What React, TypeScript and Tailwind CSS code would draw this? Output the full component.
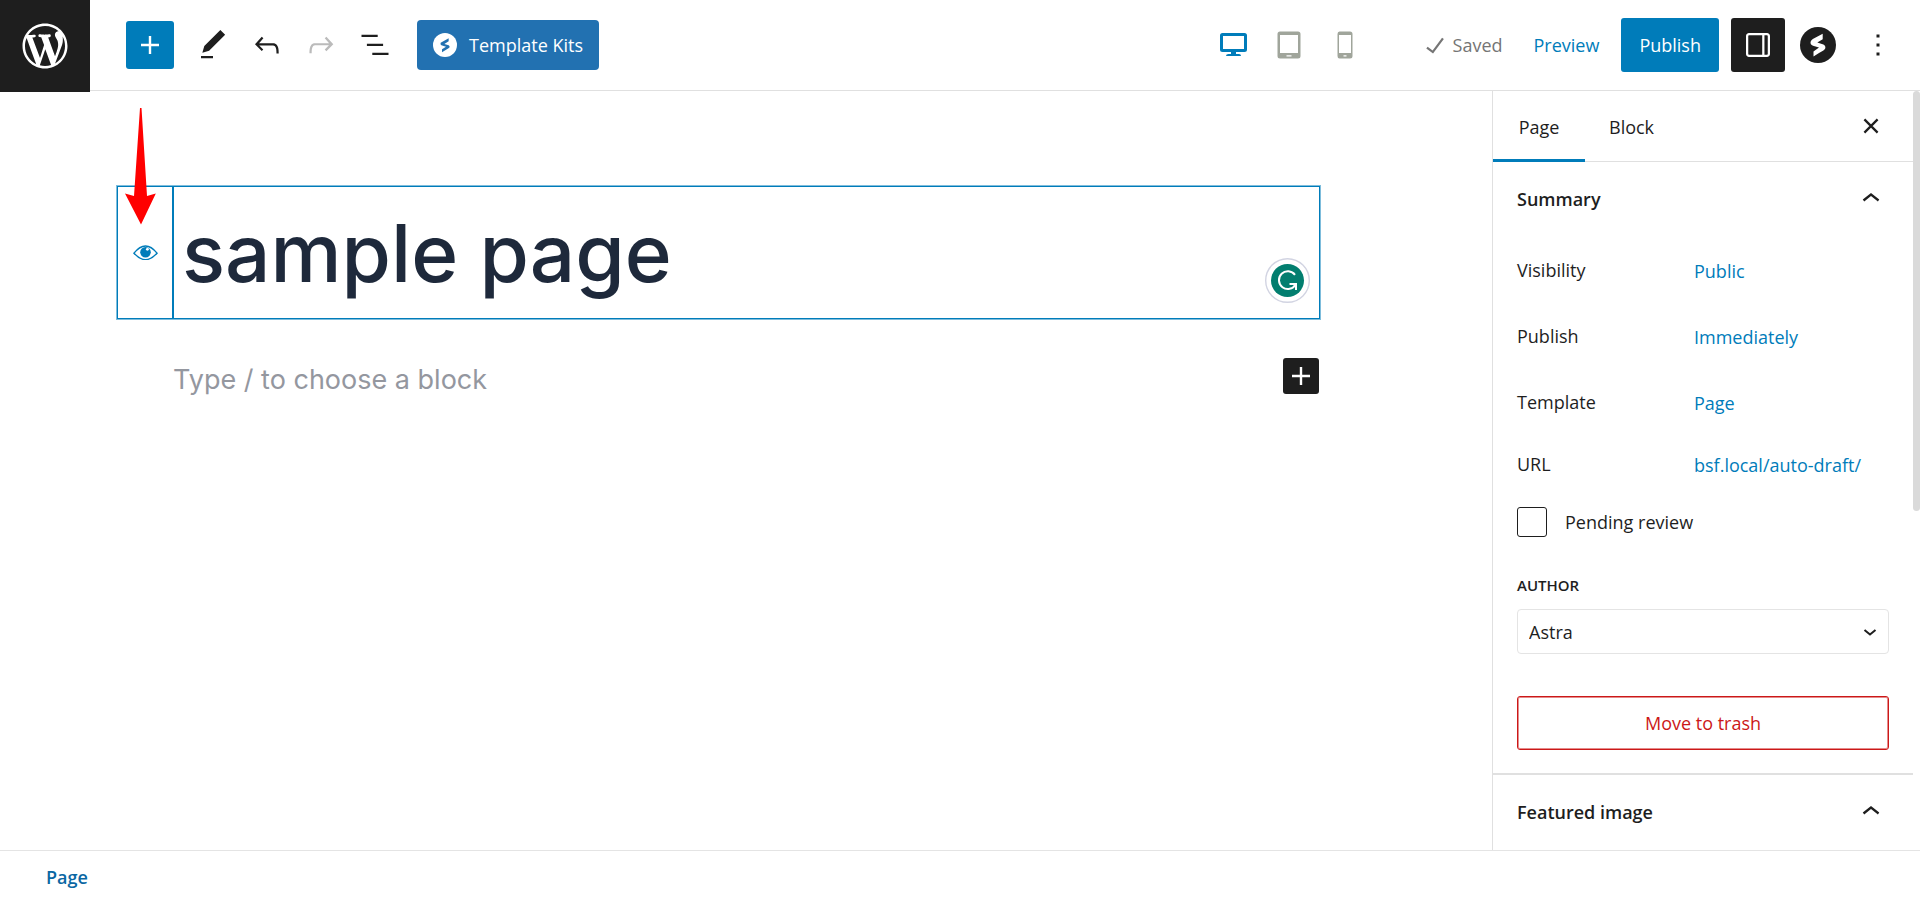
import type { ReactNode } from "react";

function Icon({ children, className = "size-9" }: { children: ReactNode; className?: string }) {
  return (
    <svg viewBox="0 0 24 24" className={className} fill="currentColor" aria-hidden="true">
      {children}
    </svg>
  );
}

function WordPressLogo() {
  return (
    <svg viewBox="-2 -2 24 24" className="size-[54px]" fill="currentColor" aria-hidden="true">
      <path d="M20 10c0-5.51-4.49-10-10-10C4.48 0 0 4.49 0 10c0 5.52 4.48 10 10 10 5.51 0 10-4.48 10-10zM7.78 15.37L4.37 6.22c.55-.02 1.17-.08 1.17-.08.5-.06.44-1.13-.06-1.11 0 0-1.45.11-2.37.11-.18 0-.37 0-.58-.01C4.12 2.69 6.87 1.11 10 1.11c2.33 0 4.45.87 6.05 2.34-.68-.11-1.65.39-1.65 1.58 0 .74.45 1.36.9 2.1.35.61.55 1.36.55 2.46 0 1.49-1.4 5-1.4 5l-3.03-8.37c.54-.02.82-.17.82-.17.5-.05.44-1.25-.06-1.22 0 0-1.44.12-2.38.12-.87 0-2.33-.12-2.33-.12-.5-.03-.56 1.2-.06 1.22l.92.08 1.26 3.41zM17.41 10c.24-.64.74-1.87.43-4.25.7 1.29 1.05 2.71 1.05 4.25 0 3.29-1.73 6.24-4.4 7.78.97-2.59 1.94-5.2 2.92-7.78zM6.1 18.09C3.12 16.65 1.11 13.53 1.11 10c0-1.3.23-2.48.72-3.59C3.25 10.3 4.67 14.2 6.1 18.09zm4.03-6.63l2.58 6.98c-.86.29-1.76.45-2.71.45-.79 0-1.57-.11-2.29-.33.81-2.38 1.62-4.74 2.42-7.1z" />
    </svg>
  );
}

function TemplateKitsMark() {
  return (
    <svg viewBox="0 0 36 36" className="size-6" aria-hidden="true">
      <circle cx="18" cy="18" r="18" className="fill-white" />
      <path
        className="fill-[#2271b1]"
        d="M23.5 8V12.2L17 16.500L23.500 18.300Q25.800 19.500 24.500 22L13.500 28.800V24.500L19.500 20.500L12.500 18.500Q10.500 17.200 11.500 14.800Z"
      />
    </svg>
  );
}

function SpectraMark() {
  return (
    <svg viewBox="0 0 36 36" className="size-9" aria-hidden="true">
      <circle cx="18" cy="18" r="18" className="fill-[#1e1e1e]" />
      <path
        className="fill-white"
        d="M22.700 6.700V12.200L17.300 15.600L23.400 17.400Q26 18.800 25.200 21.400Q24.700 22.600 23.400 23.400L19 26L13.500 29.600V24.600L19 20.600L13 18.800Q10 17.600 10.600 14.800Q11.200 13 12.800 12Z"
      />
    </svg>
  );
}

function ToolbarButton({ label, children, disabled }: { label: string; children: ReactNode; disabled?: boolean }) {
  return (
    <button
      type="button"
      aria-label={label}
      disabled={disabled}
      className="flex size-12 items-center justify-center rounded-xs text-[#1e1e1e] disabled:text-[#bbbbbb]"
    >
      {children}
    </button>
  );
}

function Header() {
  return (
    <header className="flex h-[91px] shrink-0 items-start border-b border-[#e0e0e0]">
      <a href="#dashboard" aria-label="View pages" className="flex h-[92px] w-[90px] shrink-0 items-center justify-center bg-[#1e1e1e] text-white">
        <WordPressLogo />
      </a>
      <div className="flex h-[90px] grow items-center justify-between pr-[15px] pl-9">
        <div className="flex items-center gap-[6px]">
          <button type="button" aria-label="Toggle block inserter" className="mr-[9px] flex size-12 items-center justify-center rounded-[3px] bg-[#007cba] text-white">
            <Icon>
              <path d="M18 11.2h-5.2V6h-1.6v5.2H6v1.6h5.2V18h1.6v-5.2H18z" />
            </Icon>
          </button>
          <ToolbarButton label="Tools">
            <Icon>
              <path d="M20.1 5.1L16.9 2 6.2 12.7l-1.3 4.4 4.5-1.3L20.1 5.1zM4 20.8h8v-1.5H4v1.5z" />
            </Icon>
          </ToolbarButton>
          <ToolbarButton label="Undo">
            <Icon>
              <path d="M18.3 11.7c-.6-.6-1.4-.9-2.3-.9H6.7l2.9-3.3-1.1-1-4.5 5L8.5 16l1-1-2.7-2.7H16c.5 0 .9.2 1.3.5 1 1 1 3.4 1 4.5v.3h1.5v-.2c0-1.5 0-4.3-1.5-5.7z" />
            </Icon>
          </ToolbarButton>
          <ToolbarButton label="Redo" disabled>
            <Icon>
              <path d="M15.6 6.5l-1.1 1 2.9 3.3H8c-.9 0-1.7.3-2.3.9-1.4 1.5-1.4 4.2-1.4 5.6v.2h1.5v-.3c0-1.1 0-3.5 1-4.5.3-.3.7-.5 1.3-.5h9.2L14.5 15l1.1 1.1 4.6-4.6-4.6-5z" />
            </Icon>
          </ToolbarButton>
          <ToolbarButton label="Document overview">
            <Icon>
              <path d="M13.8 5.2H3v1.5h10.8V5.2zm-3.6 12v1.5H21v-1.5H10.2zm7.2-6H6.6v1.5h10.8v-1.5z" />
            </Icon>
          </ToolbarButton>
          <button type="button" className="ml-3 flex h-[50px] items-center gap-3 rounded-[4px] bg-[#2271b1] px-4 text-lg text-white">
            <TemplateKitsMark />
            Template Kits
          </button>
        </div>
        <div className="flex items-center">
          <div className="flex items-center gap-7 text-[#a0a59b]">
            <button type="button" aria-label="Desktop" className="text-[#007cba]">
              <svg viewBox="0 0 28 28" className="size-7" fill="currentColor" aria-hidden="true">
                <path fillRule="evenodd" d="M3 2H24.500Q27 2 27 4.500V18.500Q27 21 24.500 21H16V23H19Q21 23 21 25H6Q6 23 8.500 23H11V21H2.500Q0 21 0 18.500V4.500Q0 2 2.500 2ZM3 5V18H24V5Z" />
              </svg>
            </button>
            <button type="button" aria-label="Tablet">
              <svg viewBox="0 0 28 28" className="size-7" fill="currentColor" aria-hidden="true">
                <path fillRule="evenodd" d="M4 0.500H22Q24.500 0.500 24.500 3V25Q24.500 27.500 22 27.500H4Q1.500 27.500 1.500 25V3Q1.500 0.500 4 0.500ZM4 4V22H22V4ZM10.500 24.300V25.500H15.500V24.300Z" />
              </svg>
            </button>
            <button type="button" aria-label="Mobile">
              <svg viewBox="0 0 28 28" className="size-7" fill="currentColor" aria-hidden="true">
                <path fillRule="evenodd" d="M7.500 0.500H18Q20.500 0.500 20.500 3V25Q20.500 27.500 18 27.500H7.500Q5.500 27.500 5.500 25V3Q5.500 0.500 7.500 0.500ZM7 4V22H19V4ZM11.500 24.300V25.500H14.500V24.300Z" />
              </svg>
            </button>
          </div>
          <div className="ml-[57px] flex items-center text-lg text-[#757575]">
            <Icon>
              <path d="M16.700 7.100l-6.300 8.500-3.300-2.500-.9 1.200 4.500 3.400L17.900 8z" />
            </Icon>
            Saved
          </div>
          <button type="button" className="ml-[31px] text-lg text-[#007cba]">Preview</button>
          <button type="button" className="ml-[22px] h-[54px] rounded-[3px] bg-[#007cba] px-[18px] text-lg text-white">Publish</button>
          <button type="button" aria-label="Settings" className="ml-3 flex size-[54px] items-center justify-center rounded-[3px] bg-[#1e1e1e] text-white">
            <Icon>
              <path fillRule="evenodd" d="M18 4H6c-1.100 0-2 .9-2 2v12c0 1.100.9 2 2 2h12c1.100 0 2-.9 2-2V6c0-1.100-.9-2-2-2zm-4 14.500H6c-.3 0-.5-.2-.5-.5V6c0-.3.2-.5.5-.5h8.800v13zm4.500-.5c0 .3-.2.5-.5.5h-1.700v-13H18c.3 0 .5.200.5.500v12z" />
            </Icon>
          </button>
          <button type="button" aria-label="Spectra Page Settings" className="ml-[15px]">
            <SpectraMark />
          </button>
          <button type="button" aria-label="Options" className="ml-[15px] flex size-[54px] items-center justify-center text-[#1e1e1e]">
            <Icon>
              <path d="M13 19h-2v-2h2v2zm0-6h-2v-2h2v2zm0-6h-2V5h2v2z" />
            </Icon>
          </button>
        </div>
      </div>
    </header>
  );
}

function GrammarlyBadge() {
  return (
    <svg viewBox="0 0 45 45" className="absolute right-[9px] bottom-[15px] size-[45px]" aria-hidden="true">
      <circle cx="22.500" cy="22.500" r="21.800" fill="#fff" stroke="#d2d4e2" strokeWidth="1.400" />
      <circle cx="22.500" cy="22.500" r="16.500" fill="#027e6f" />
      <path d="M30 16.800A8.900 8.900 0 1 0 30.600 26.500" fill="none" stroke="#fff" strokeWidth="2" />
      <path d="M24.500 26H31V32" fill="none" stroke="#fff" strokeWidth="2" />
    </svg>
  );
}

function Editor() {
  return (
    <main className="min-w-0 grow px-16 pt-[95px] font-[Inter,sans-serif]">
      <div className="mx-auto max-w-[1148px]">
        <div className="relative -ml-[55px] flex h-[133px] border border-[#007cba] ring-1 ring-[#007cba]/50">
          <button type="button" aria-label="Disable title" className="flex w-[54px] shrink-0 items-center justify-center text-[#007cba]">
            <svg viewBox="0 0 26 16" className="w-[25px]" fill="none" aria-hidden="true">
              <path d="M1 8.500Q13 -6.500 25 8.500Q13 22 1 8.500Z" stroke="currentColor" strokeWidth="1.500" />
              <circle cx="13" cy="7.500" r="5.500" fill="currentColor" />
              <circle cx="15" cy="4.500" r="1.500" fill="#fff" />
            </svg>
          </button>
          <h1 contentEditable suppressContentEditableWarning className="grow border-l-2 border-[#007cba] pl-2 text-[80px] leading-[132px] font-medium text-[#1e293b] outline-none">
            sample page
          </h1>
          <GrammarlyBadge />
          <svg viewBox="0 0 32 117" className="absolute -top-[79px] left-[6px] w-8" fill="#ff0000" aria-hidden="true">
            <path d="M16 0H17.500L23 88L31.800 85.500L17 116.500L1 85.500L10 88Z" />
          </svg>
        </div>
        <div className="mt-[39px] flex items-start justify-between px-px">
          <p className="text-[27px] leading-[44px] text-[#94979f]">Type / to choose a block</p>
          <button type="button" aria-label="Add block" className="flex size-9 items-center justify-center rounded-[3px] bg-[#1e1e1e] text-white">
            <Icon>
              <path d="M18 11.200h-5.200V6h-1.600v5.200H6v1.600h5.200V18h1.600v-5.200H18z" />
            </Icon>
          </button>
        </div>
      </div>
    </main>
  );
}

function PanelHeading({ children }: { children: ReactNode }) {
  return (
    <h2>
      <button type="button" aria-expanded="true" className="flex h-[74px] w-full items-center justify-between px-6 text-lg font-semibold">
        {children}
        <Icon>
          <path d="M6.500 12.400L12 8l5.500 4.400-.9 1.200L12 10l-4.500 3.600-1-1.200z" />
        </Icon>
      </button>
    </h2>
  );
}

const summary = [
  { label: "Visibility", value: "Public" },
  { label: "Publish", value: "Immediately" },
  { label: "Template", value: "Page" },
  { label: "URL", value: "bsf.local/auto-draft/" },
];

function Sidebar() {
  return (
    <aside className="flex w-[428px] shrink-0 overflow-hidden border-l border-[#e0e0e0]">
      <div className="min-w-0 grow">
        <div role="tablist" className="flex h-[71px] items-center border-b border-[#e0e0e0] pr-6">
          <button type="button" role="tab" aria-selected="true" className="h-[71px] w-[92px] border-b-3 border-[#007cba] pt-1 text-lg">Page</button>
          <button type="button" role="tab" aria-selected="false" className="h-[71px] px-6 pt-px text-lg">Block</button>
          <button type="button" aria-label="Close settings" className="ml-auto">
            <Icon>
              <path d="M7.600 7.600L16.400 16.400M16.400 7.600L7.600 16.400" stroke="currentColor" strokeWidth="1.500" />
            </Icon>
          </button>
        </div>
        <PanelHeading>Summary</PanelHeading>
        <div className="px-6 pt-px text-lg">
          <dl>
            {summary.map((row) => (
              <div key={row.label} className="flex h-[66px] items-center last:h-[58px]">
                <dt className="w-[177px] shrink-0">{row.label}</dt>
                <dd className="pt-[2px]">
                  <button type="button" className="text-[#007cba]">{row.value}</button>
                </dd>
              </div>
            ))}
          </dl>
          <div className="mt-[14px] flex items-center gap-[18px]">
            <input id="pending" type="checkbox" className="size-[30px] appearance-none rounded-[3px] border border-[#1e1e1e]" />
            <label htmlFor="pending">Pending review</label>
          </div>
          <label htmlFor="author" className="mt-9 block text-[15px] leading-6 font-semibold uppercase">Author</label>
          <div className="relative mt-[12px]">
            <select id="author" className="h-[45px] w-full appearance-none rounded-[4px] border border-[#e4e4e4] px-[11px]">
              <option>Astra</option>
            </select>
            <svg viewBox="0 0 14 8" className="pointer-events-none absolute top-5 right-3 w-[14px]" fill="none" stroke="#1e1e1e" strokeWidth="2" aria-hidden="true">
              <path d="M1.500 1L7 5.500L12.500 1" />
            </svg>
          </div>
          <button type="button" className="mt-[42px] h-[54px] w-full rounded-[3px] border border-[#cc1818] text-[#cc1818] inset-ring inset-ring-[#cc1818]/50">
            Move to trash
          </button>
        </div>
        <div className="mt-[23px] border-t-2 border-[#e0e0e0]">
          <PanelHeading>Featured image</PanelHeading>
        </div>
      </div>
      <div className="h-[420px] w-[7px] shrink-0 rounded-full bg-[#dadada]" />
    </aside>
  );
}

export default function App() {
  return (
    <div className="flex h-screen flex-col bg-white font-['Open_Sans',sans-serif] text-[#1e1e1e]">
      <Header />
      <div className="flex min-h-0 grow">
        <Editor />
        <Sidebar />
      </div>
      <footer className="flex h-[52px] shrink-0 items-center border-t border-[#e4e4e4] px-[46px] text-lg font-semibold">
        <a href="#page" className="text-[#0a67a3]">Page</a>
      </footer>
    </div>
  );
}
